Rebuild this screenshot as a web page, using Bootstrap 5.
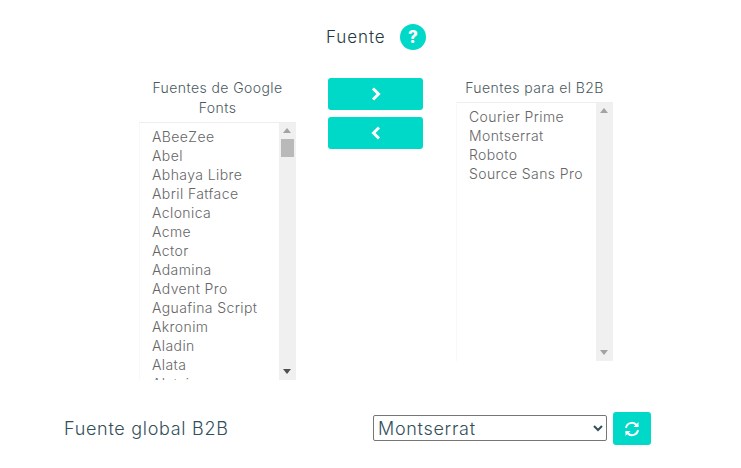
<!DOCTYPE html>
<html lang="es">
<head>
<meta charset="utf-8">
<title>Fuente</title>
<link href="https://cdn.jsdelivr.net/npm/bootstrap@5.3.0/dist/css/bootstrap.min.css" rel="stylesheet">
<style>
html,body{height:468px;overflow:hidden;background:#fff}
body{font-family:"Inter","Noto Sans",sans-serif;color:#1f3a44;font-size:14px;font-weight:300}
.page-wrap{width:741px;height:468px}
.title-row{height:74px;padding-left:326px;padding-top:24px;gap:15px}
.title-txt{font-size:17px;line-height:26px;letter-spacing:.9px;width:59px;white-space:nowrap}
.help-dot{width:26px;height:26px;border-radius:50%;background:#00d8c8;color:#fff;font-weight:800;font-size:17px;line-height:26px;text-align:center}
.lists-row{padding-left:139px;height:334px;margin-top:4px}
.col-list{width:157px}
.col-mid{width:95px;margin:0 33px 0 32px}
.list-head{font-size:14px;line-height:20px;text-align:center;color:#4a5a60;letter-spacing:.42px}
.list-box{height:258px;border-top:1px solid #eee;border-left:1px solid #f8f8f8;overflow:hidden}
.list-box.short{margin-top:4px;height:259px}
.opts{flex:1;padding:4px 0 0 12px;font-size:14px;line-height:19px;color:#666;white-space:nowrap;overflow:hidden;letter-spacing:.4px}
.fake-bar{width:17px;background:#f0f0f0;flex:none;position:relative}
.arr-up,.arr-dn{position:absolute;left:4px;width:0;height:0;border-left:4px solid transparent;border-right:4px solid transparent}
.arr-up{top:5px;border-bottom:5px solid #a3a3a3}
.arr-dn{bottom:6px;border-top:5px solid #505050}
.arr-dn.dim{border-top-color:#a3a3a3}
.thumb{position:absolute;left:2px;top:16px;width:13px;height:18px;background:#b9b9b9}
.teal-btn{background:#00d8c8;border:0;border-radius:3px;padding:0;display:flex;align-items:center;justify-content:center;width:95px;height:32px;margin-bottom:7px}
.bottom-row{height:33px;padding-left:64px}
.glob-label{font-size:18px;width:309px;letter-spacing:.7px;color:#33505a}
.glob-select{width:234px;height:26px;margin-bottom:1px;font-family:inherit;font-size:18px;font-weight:300;letter-spacing:.7px;color:#33505a;border:1px solid #767676;border-radius:2px;padding:0;background:#fff}
.refresh-btn{width:38px;height:33px;margin:0 0 0 6px}
</style>
</head>
<body>
<div class="page-wrap">
  <div class="d-flex title-row">
    <div class="title-txt">Fuente</div>
    <div class="help-dot">?</div>
  </div>
  <div class="d-flex lists-row">
    <div class="col-list">
      <div class="list-head">Fuentes de Google Fonts</div>
      <div class="list-box d-flex mt-1">
        <div class="opts">
          <div>ABeeZee</div><div>Abel</div><div>Abhaya Libre</div><div>Abril Fatface</div><div>Aclonica</div><div>Acme</div><div>Actor</div><div>Adamina</div><div>Advent Pro</div><div>Aguafina Script</div><div>Akronim</div><div>Aladin</div><div>Alata</div><div>Alatsi</div>
        </div>
        <div class="fake-bar"><span class="arr-up"></span><span class="thumb"></span><span class="arr-dn"></span></div>
      </div>
    </div>
    <div class="col-mid">
      <button class="teal-btn" type="button" aria-label="Añadir"><svg width="12" height="14" viewBox="0 0 12 14"><path d="M3 1.5 8.5 7 3 12.5" fill="none" stroke="#fff" stroke-width="3"/></svg></button>
      <button class="teal-btn" type="button" aria-label="Quitar"><svg width="12" height="14" viewBox="0 0 12 14"><path d="M9 1.5 3.5 7 9 12.5" fill="none" stroke="#fff" stroke-width="3"/></svg></button>
    </div>
    <div class="col-list">
      <div class="list-head">Fuentes para el B2B</div>
      <div class="list-box short d-flex">
        <div class="opts">
          <div>Courier Prime</div><div>Montserrat</div><div>Roboto</div><div>Source Sans Pro</div>
        </div>
        <div class="fake-bar"><span class="arr-up"></span><span class="arr-dn dim"></span></div>
      </div>
    </div>
  </div>
  <div class="d-flex align-items-center bottom-row">
    <div class="glob-label">Fuente global B2B</div>
    <select class="glob-select"><option>Montserrat</option></select>
    <button class="teal-btn refresh-btn" type="button" aria-label="Actualizar"><svg width="16" height="16" viewBox="0 0 16 16" fill="none" stroke="#fff" stroke-width="2"><path d="M2 7a6 6 0 0 1 10.5-3L14 5.5"/><path d="M14 9a6 6 0 0 1-10.5 3L2 10.5"/><path d="M14.5 1v5h-5" fill="#fff" stroke="none"/><path d="M1.5 15v-5h5" fill="#fff" stroke="none"/></svg></button>
  </div>
</div>
</body>
</html>
